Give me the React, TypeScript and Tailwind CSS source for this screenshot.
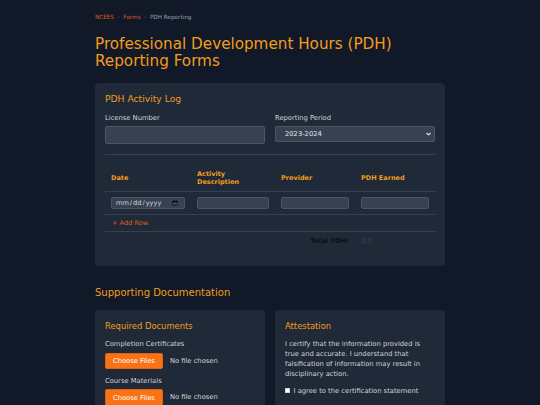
import React, { useState } from 'react';

type Row = { date: string; description: string; provider: string; pdh: string };

const emptyRow = (): Row => ({ date: '', description: '', provider: '', pdh: '' });

const App = () => {
  const [rows, setRows] = useState<Row[]>([emptyRow()]);
  const [period, setPeriod] = useState('2023-2024');
  const [agreed, setAgreed] = useState(false);

  const total = rows.reduce((sum, r) => sum + (parseFloat(r.pdh) || 0), 0);

  const updateRow = (i: number, key: keyof Row, value: string) => {
    setRows(prev => prev.map((r, idx) => (idx === i ? { ...r, [key]: value } : r)));
  };

  return (
    <div className="min-h-screen bg-[#111827] font-['DejaVu_Sans',sans-serif] text-gray-300">
      <div className="mx-auto w-[350px] pt-[13px] pb-[24px]">
        {/* Breadcrumb */}
        <nav className="flex items-center text-[5.7px] leading-[8px]">
          <a className="text-[#d9601c]">NCEES</a>
          <span className="mx-[3.5px] text-gray-600">›</span>
          <a className="text-[#d9601c]">Forms</a>
          <span className="mx-[3.5px] text-gray-600">›</span>
          <span className="text-gray-400">PDH Reporting</span>
        </nav>

        <h1 className="mt-[15px] text-[15.2px] leading-[17px] text-[#f29d1c]">
          Professional Development Hours (PDH) Reporting Forms
        </h1>

        {/* Activity log */}
        <section className="mt-[12.5px] rounded-[4px] bg-[#1f2937] p-[10px]">
          <h2 className="text-[9.2px] leading-[12px] text-[#f29d1c]">PDH Activity Log</h2>

          <div className="mt-[8px] grid grid-cols-2 gap-x-[10px]">
            <div>
              <label className="mb-[3.5px] block text-[6.75px] leading-[10px] text-gray-300">License Number</label>
              <input
                type="text"
                className="block h-[17.5px] w-full rounded-[2px] border border-[#4b5563] bg-[#374151] px-[5px] text-[6.75px] text-gray-200 outline-none"
              />
            </div>
            <div>
              <label className="mb-[3.5px] block text-[6.75px] leading-[10px] text-gray-300">Reporting Period</label>
              <div className="relative">
                <select
                  value={period}
                  onChange={e => setPeriod(e.target.value)}
                  className="block h-[16px] w-full appearance-none rounded-[2px] border border-[#4b5563] bg-[#374151] pl-[9px] pr-[12px] text-[6.75px] leading-[14px] text-gray-200 outline-none"
                >
                  <option>2023-2024</option>
                  <option>2022-2023</option>
                  <option>2021-2022</option>
                </select>
                <svg
                  viewBox="0 0 10 6"
                  className="pointer-events-none absolute right-[4px] top-1/2 h-[3px] w-[5px] -translate-y-1/2 text-gray-200"
                  fill="none"
                  stroke="currentColor"
                  strokeWidth="2.2"
                >
                  <path d="M1 1l4 4 4-4" />
                </svg>
              </div>
            </div>
          </div>

          <hr className="mt-[10px] border-[#374151]" />

          <table className="mt-[10.5px] w-full table-fixed border-collapse text-[6.6px] leading-[8px]">
            <colgroup>
              <col className="w-[86px]" />
              <col className="w-[84px]" />
              <col className="w-[80px]" />
              <col className="w-[80px]" />
            </colgroup>
            <thead>
              <tr className="border-b border-[#374151]">
                <th className="px-[6px] py-[5px] text-left text-[6.5px] leading-[8px] font-bold text-[#f29d1c]">Date</th>
                <th className="px-[6px] py-[5px] text-left text-[6.5px] leading-[8px] font-bold text-[#f29d1c]">Activity Description</th>
                <th className="px-[6px] py-[5px] text-left text-[6.5px] leading-[8px] font-bold text-[#f29d1c]">Provider</th>
                <th className="px-[6px] py-[5px] text-left text-[6.5px] leading-[8px] font-bold text-[#f29d1c]">PDH Earned</th>
              </tr>
            </thead>
            <tbody>
              {rows.map((row, i) => (
                <tr key={i} className="border-b border-[#374151]">
                  <td className="px-[6px] py-[4.8px]">
                    <input
                      type="date"
                      value={row.date}
                      onChange={e => updateRow(i, 'date', e.target.value)}
                      className="block h-[12.6px] w-full rounded-[2px] border border-[#4b5563] bg-[#374151] px-[3px] text-[6.6px] text-gray-300 outline-none"
                    />
                  </td>
                  <td className="px-[6px] py-[4.8px]">
                    <input
                      type="text"
                      value={row.description}
                      onChange={e => updateRow(i, 'description', e.target.value)}
                      className="block h-[12.6px] w-full rounded-[2px] border border-[#4b5563] bg-[#374151] px-[3px] text-[6.6px] text-gray-200 outline-none"
                    />
                  </td>
                  <td className="px-[6px] py-[4.8px]">
                    <input
                      type="text"
                      value={row.provider}
                      onChange={e => updateRow(i, 'provider', e.target.value)}
                      className="block h-[12.6px] w-full rounded-[2px] border border-[#4b5563] bg-[#374151] px-[3px] text-[6.6px] text-gray-200 outline-none"
                    />
                  </td>
                  <td className="px-[6px] py-[4.8px]">
                    <input
                      type="text"
                      value={row.pdh}
                      onChange={e => updateRow(i, 'pdh', e.target.value)}
                      className="block h-[12.6px] w-full rounded-[2px] border border-[#4b5563] bg-[#374151] px-[3px] text-[6.6px] text-gray-200 outline-none"
                    />
                  </td>
                </tr>
              ))}
              <tr className="border-b border-[#374151]">
                <td colSpan={4} className="px-[7px] py-[4px]">
                  <button
                    onClick={() => setRows(prev => [...prev, emptyRow()])}
                    className="block text-[6.6px] leading-[8px] text-[#d9601c]"
                  >
                    + Add Row
                  </button>
                </td>
              </tr>
            </tbody>
            <tfoot>
              <tr>
                <td colSpan={3} className="px-[6px] pt-[5px] pb-[11px] text-right text-[6.6px] leading-[8px] font-bold text-[#0b0f19]">
                  Total PDH:
                </td>
                <td className="px-[6px] pt-[5px] pb-[11px] text-[6.6px] leading-[8px] text-[#3b4454]">
                  {total.toFixed(1)}
                </td>
              </tr>
            </tfoot>
          </table>
        </section>

        {/* Supporting docs */}
        <h2 className="mt-[21px] text-[10px] leading-[12px] text-[#f29d1c]">Supporting Documentation</h2>

        <div className="mt-[11px] grid grid-cols-2 gap-x-[10px]">
          <div className="rounded-[4px] bg-[#1f2937] p-[10px] pb-[16px]">
            <h3 className="text-[8.4px] leading-[12px] text-[#f29d1c]">Required Documents</h3>
            <div className="mt-[7px]">
              <label className="mb-[3.5px] block text-[6.75px] leading-[10px] text-gray-300">Completion Certificates</label>
              <input
                type="file"
                multiple
                className="block text-[6.75px] text-gray-300 file:mr-[7px] file:h-[16.6px] file:cursor-pointer file:rounded-[2px] file:border file:border-[#e2600f] file:bg-[#f97316] file:px-[7px] file:text-white"
              />
            </div>
            <div className="mt-[6.7px]">
              <label className="mb-[3.5px] block text-[6.75px] leading-[10px] text-gray-300">Course Materials</label>
              <input
                type="file"
                multiple
                className="block text-[6.75px] text-gray-300 file:mr-[7px] file:h-[16.6px] file:cursor-pointer file:rounded-[2px] file:border file:border-[#e2600f] file:bg-[#f97316] file:px-[7px] file:text-white"
              />
            </div>
          </div>

          <div className="rounded-[4px] bg-[#1f2937] p-[10px] pb-[16px]">
            <h3 className="text-[8.4px] leading-[12px] text-[#f29d1c]">Attestation</h3>
            <p className="mt-[7px] text-[6.75px] leading-[10px] text-gray-300">
              I certify that the information provided is true and accurate. I understand that falsification of
              information may result in disciplinary action.
            </p>
            <label className="mt-[6.7px] flex items-center gap-[3.5px] text-[6.75px] leading-[10px] text-gray-300">
              <input
                type="checkbox"
                checked={agreed}
                onChange={e => setAgreed(e.target.checked)}
                className="m-0 h-[5px] w-[5px] shrink-0 appearance-none rounded-[0.5px] border border-gray-300 bg-white checked:bg-[#f97316]"
              />
              I agree to the certification statement
            </label>
          </div>
        </div>
      </div>
    </div>
  );
};

export default App;
